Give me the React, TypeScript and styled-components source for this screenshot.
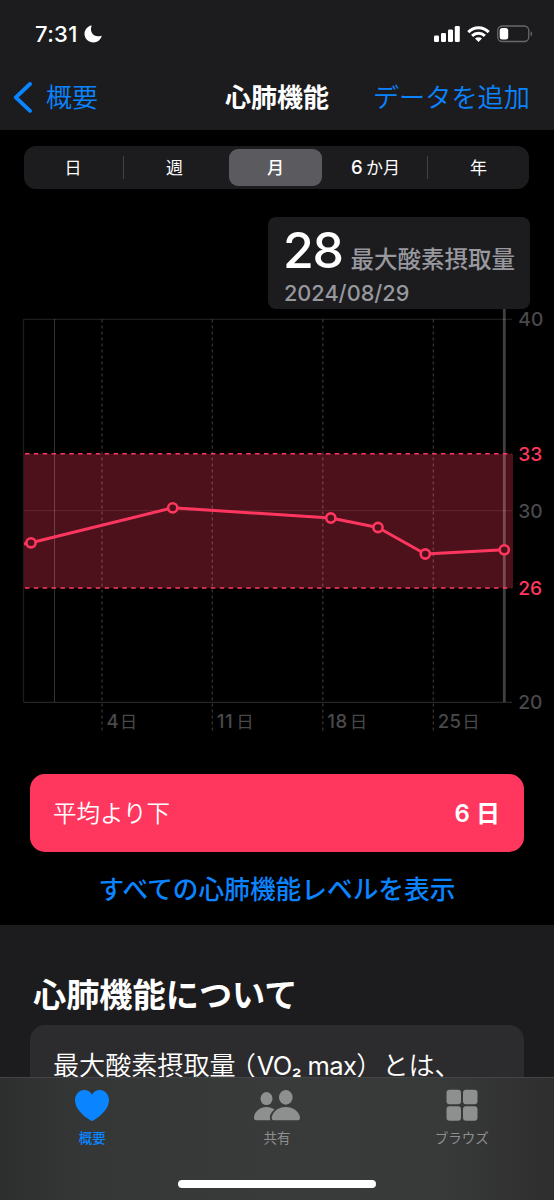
import React from "react";
import styled, { createGlobalStyle } from "styled-components";

const FONT = `Inter, "Noto Sans CJK JP", sans-serif`;
const BLUE = "#0a84ff";
const PINK = "#ff375f";

const GlobalStyle = createGlobalStyle`
  *, *::before, *::after { box-sizing: border-box; }
  body { margin: 0; background: #000; font-family: ${FONT}; color: #fff; }
  svg { display: block; }
`;

const Screen = styled.div`
  width: 554px;
  height: 1200px;
  display: flex;
  flex-direction: column;
  overflow: hidden;
  background: #000;
`;

const Header = styled.header`
  height: 130px;
  flex: none;
  background: #1c1c1e;
`;

const StatusBar = styled.div`
  height: 68px;
  padding: 0 21px 0 35px;
  display: flex;
  align-items: center;
  justify-content: space-between;
`;

const Clock = styled.div`
  display: flex;
  align-items: center;
  gap: 6px;
  font-size: 22px;
  font-weight: 550;
  line-height: 26px;
  letter-spacing: 0.3px;
`;

const StatusIcons = styled.div`
  display: flex;
  align-items: center;
  gap: 7px;
`;

const NavBar = styled.nav`
  height: 58px;
  padding-top: 2px;
  display: grid;
  grid-template-columns: 225px 104px 1fr;
  align-items: center;
  font-size: 26px;
  line-height: 38px;
  white-space: nowrap;
`;

const NavLink = styled.a<{ $end?: boolean }>`
  display: flex;
  align-items: center;
  gap: 13px;
  justify-content: ${(p) => (p.$end ? "flex-end" : "flex-start")};
  padding: ${(p) => (p.$end ? "0 24px 0 0" : "0 0 0 13px")};
  font-size: ${(p) => (p.$end ? "26.2px" : "26px")};
  color: ${BLUE};
  font-weight: 350;
`;

const NavTitle = styled.h1`
  margin: 0;
  font-size: 26px;
  font-weight: 600;
`;

const Content = styled.main`
  flex: 1;
  min-height: 0;
  overflow: hidden;
`;

const ChartSection = styled.section`
  height: 795px;
  padding-top: 16px;
`;

const Segmented = styled.div`
  height: 43px;
  margin: 0 25px 0 24px;
  padding: 3px;
  border-radius: 12px;
  background: #1c1c1e;
  display: grid;
  grid-template-columns: 97px 105px 93px 106px 1fr;
`;

const Segment = styled.div<{ $active?: boolean; $divider?: boolean }>`
  display: flex;
  align-items: center;
  justify-content: center;
  border-radius: 9px;
  font-size: 17px;
  line-height: 24px;
  font-weight: ${(p) => (p.$active ? 500 : 400)};
  background: ${(p) => (p.$active ? "#5b5a5f" : "transparent")};
  ${(p) =>
    p.$divider &&
    `&::after {
      content: "";
      width: 1px;
      height: 23px;
      background: #424245;
      margin-left: auto;
    }
    &::before {
      content: "";
      margin-right: auto;
    }`}
`;

const SegmentLabel = styled.span<{ $shift?: number }>`
  margin: ${(p) => `0 ${Math.max(p.$shift ?? 0, 0)}px 0 ${Math.max(-(p.$shift ?? 0), 0)}px`};
`;

const SegmentDigit = styled.span`
  margin-right: 3.5px;
  font-size: 18.5px;
  font-weight: 500;
`;

const Callout = styled.div`
  width: 262px;
  height: 92px;
  margin: 28px 0 0 268px;
  padding: 5px 15px 0 15px;
  border-radius: 8px;
  background: #1c1c1e;
  white-space: nowrap;
`;

const CalloutValue = styled.div`
  display: flex;
  align-items: baseline;
  height: 57px;
  line-height: 56px;
  font-size: 50px;
  font-weight: 500;
  letter-spacing: -1.4px;
`;

const CalloutUnit = styled.span`
  margin-left: 8px;
  font-size: 23.5px;
  font-weight: 500;
  letter-spacing: 0;
  color: #98989f;
`;

const CalloutDate = styled.div`
  padding-left: 1px;
  font-size: 21.7px;
  line-height: 28px;
  font-weight: 500;
  color: #98989f;
`;

const Chart = styled.svg`
  width: 554px;
  height: 441px;
  font-family: ${FONT};
  font-weight: 500;
`;

const LevelCard = styled.div`
  height: 78px;
  margin: 24px 30px 0;
  padding: 2px 24px 0 23px;
  border-radius: 15px;
  background: ${PINK};
  display: flex;
  align-items: center;
  justify-content: space-between;
  font-size: 23.5px;
  line-height: 34px;
  font-weight: 350;
`;

const LevelCount = styled.strong`
  font-size: 24px;
  font-weight: 600;
`;

const AllLevels = styled.a`
  display: block;
  margin-top: 19px;
  text-align: center;
  font-size: 25.7px;
  line-height: 38px;
  font-weight: 500;
  color: ${BLUE};
`;

const About = styled.section`
  height: 400px;
  padding: 46px 30px 0;
  background: #1c1c1e;
`;

const AboutTitle = styled.h2`
  margin: 0 0 6px 3px;
  font-size: 33.2px;
  line-height: 48px;
  font-weight: 700;
`;

const AboutCard = styled.div`
  height: 300px;
  padding: 22px 23px;
  border-radius: 15px;
  background: #2c2c2e;
  font-size: 26.1px;
  line-height: 38px;
  font-weight: 350;
  white-space: nowrap;
`;

const Latin = styled.span`
  font-size: 25.5px;
  letter-spacing: -0.6px;
  font-weight: 400;
`;

const Subscript = styled.span`
  font-size: 22px;
  font-weight: 500;
  line-height: 1;
  vertical-align: 1.5px;
`;

const OpenParen = styled.span`
  display: inline-block;
  width: 21px;
  text-indent: -6px;
`;

const TabBar = styled.footer`
  height: 123px;
  flex: none;
  border-top: 1px solid #434445;
  background: linear-gradient(90deg, #2d2e2e 0%, #353636 15%, #393a3a 50%, #383939 80%, #2e2e2e 100%);
  display: flex;
  flex-direction: column;
  align-items: center;
`;

const Tabs = styled.div`
  width: 100%;
  height: 102px;
  display: grid;
  grid-template-columns: repeat(3, 1fr);
`;

const Tab = styled.div<{ $active?: boolean }>`
  display: flex;
  flex-direction: column;
  align-items: center;
  padding-top: 11px;
  gap: 6px;
  color: ${(p) => (p.$active ? BLUE : "#8e8f8f")};
  font-size: 13.5px;
  line-height: 20px;
  font-weight: ${(p) => (p.$active ? 500 : 400)};
`;

const HomeIndicator = styled.div`
  width: 198px;
  height: 8px;
  border-radius: 4px;
  background: #fff;
`;

const GRID_X = [
  { x: 102, day: "4", dayWidth: 14.2 },
  { x: 212.3, day: "11", dayWidth: 20.5 },
  { x: 322.8, day: "18", dayWidth: 23.5 },
  { x: 433.3, day: "25", dayWidth: 25.5 },
];

const AXIS = [
  { y: 10, label: "40" },
  { y: 144.3, label: "33", accent: true },
  { y: 201.5, label: "30" },
  { y: 278.3, label: "26", accent: true },
  { y: 393, label: "20" },
];

const POINTS = [
  [31, 233.8],
  [172.7, 198.8],
  [330.8, 209],
  [378, 218.5],
  [425.3, 245],
  [504.3, 240.8],
];

function CardioChart() {
  return (
    <Chart viewBox="0 0 554 441">
      <g stroke="#1d1d1f" strokeWidth="1.3">
        <path d="M23.5 10.3H512M23.5 10v383" />
        <path d="M23.5 393.3H512" stroke="#262628" />
      </g>
      <rect x="24" y="145" width="489" height="134" fill="#4d111c" />
      <path d="M24 201.7H512" stroke="#642631" strokeWidth="1" />
      <path d="M54.5 10V393" stroke="#fff" strokeOpacity=".2" strokeWidth="1" />
      {GRID_X.map((g) => (
        <g key={g.day}>
          <path d={`M${g.x} 10.5V424`} stroke="#fff" strokeOpacity=".22" strokeWidth="1.2" strokeDasharray="3 3" />
          <text x={g.x + 4.5} y="419" fontSize="18.5" letterSpacing=".4" fill="#49494b">
            {g.day}
          </text>
          <text x={g.x + 3.5 + g.dayWidth} y="419" fontSize="17.5" fontWeight="400" fill="#49494b">
            日
          </text>
        </g>
      ))}
      <path d="M504.3 0V393" stroke="#fff" strokeOpacity=".25" strokeWidth="2.8" />
      <path d="M25 144.8H512M25 279H512" stroke={PINK} strokeWidth="1.5" strokeDasharray="4.5 4.35" />
      <path
        d={`M24 235L${POINTS.map((p) => p.join(" ")).join("L")}`}
        fill="none"
        stroke={PINK}
        strokeWidth="3"
        strokeLinejoin="round"
      />
      {POINTS.map(([x, y]) => (
        <circle key={x} cx={x} cy={y} r="4.6" fill="#4d111c" stroke={PINK} strokeWidth="2.6" />
      ))}
      {AXIS.map((a) => (
        <text key={a.label} x="518.3" y={a.y + 7.4} fontSize="19.2" fill={a.accent ? PINK : "#49494b"}>
          {a.label}
        </text>
      ))}
    </Chart>
  );
}

function MoonIcon() {
  return (
    <svg width="18" height="18" viewBox="0 0 18 18" fill="#fff">
      <path d="M6.7.5C7.4.2 7.8.7 7.5 1.3C5.6 6.3 8.9 11.3 14 11.3C15.1 11.3 15.9 11.2 16.7 10.9C17.4 10.7 17.8 11.1 17.5 11.8C16.2 15.2 13.1 17.5 9.6 17.5C4.5 17.5.5 13.7.5 8.8C.5 5.2 3 1.9 6.7.5Z" />
    </svg>
  );
}

function SignalIcon() {
  return (
    <svg width="26" height="16" viewBox="0 0 26 16" fill="#fff">
      <rect x="0" y="9.5" width="5" height="6.5" rx="1.3" />
      <rect x="7" y="7" width="5" height="9" rx="1.3" />
      <rect x="14" y="3.5" width="5" height="12.5" rx="1.3" />
      <rect x="20.8" y="0" width="5" height="16" rx="1.3" />
    </svg>
  );
}

function WifiIcon() {
  return (
    <svg width="23" height="16" viewBox="0 0 23 16" fill="none" stroke="#fff" strokeWidth="3">
      <path d="M1.3 6.1C7.1.3 15.9.3 21.7 6.1" />
      <path d="M5.1 9.9C8.8 6.3 14.2 6.3 17.9 9.9" />
      <path d="M11.5 16L8 12.6C10 10.8 13 10.8 15 12.6Z" fill="#fff" stroke="none" />
    </svg>
  );
}

function BatteryIcon() {
  return (
    <svg width="36" height="18" viewBox="0 0 36 18">
      <rect x=".75" y="1" width="31" height="15.5" rx="4.5" fill="none" stroke="#68686b" strokeWidth="1.3" />
      <rect x="2.7" y="3" width="8.5" height="11.5" rx="2.5" fill="#fff" />
      <path d="M33.6 6.2C35.7 7 35.7 10.5 33.6 11.3Z" fill="#68686b" />
    </svg>
  );
}

function ChevronIcon() {
  return (
    <svg width="20" height="32" viewBox="0 0 20 32" fill="none" stroke={BLUE} strokeWidth="3.9" strokeLinecap="round" strokeLinejoin="round">
      <path d="M17 2L2.8 15.3L17 28.8" />
    </svg>
  );
}

function HeartIcon() {
  return (
    <svg width="36" height="33" viewBox="0 0 36 33" fill={BLUE}>
      <path d="M18 32C17.4 32 16.9 31.7 16.3 31.3C8.1 26.2 1 19.2 1 11.5C1 5.5 5 1 10.3 1C13.7 1 16.5 2.8 18 5.6C19.5 2.8 22.3 1 25.7 1C31 1 35 5.5 35 11.5C35 19.2 27.9 26.2 19.7 31.3C19.1 31.7 18.6 32 18 32Z" />
    </svg>
  );
}

function PeopleIcon() {
  return (
    <svg width="48" height="33" viewBox="0 0 48 33" fill="currentColor">
      <ellipse cx="13.5" cy="9.6" rx="6" ry="6.5" />
      <ellipse cx="32.8" cy="8.4" rx="6.8" ry="7.3" />
      <path d="M3.5 31.2C1.8 31.2 1 30.4 1 28.7C1 23.5 6.2 18 13.5 18C16.7 18 19.4 19 21.5 20.6C18.3 23 16.7 26 16.9 28.9C16.9 29.8 17.2 30.6 17.6 31.2Z" />
      <path d="M21.5 31.2C19.6 31.2 18.7 30.4 18.7 28.9C18.7 24.7 24 18 32.8 18C41.7 18 47 24.7 47 28.9C47 30.4 46 31.2 44.1 31.2Z" />
    </svg>
  );
}

function GridIcon() {
  return (
    <svg width="32" height="33" viewBox="0 0 32 33" fill="currentColor">
      <rect x=".5" y=".8" width="14.5" height="14.5" rx="3" />
      <rect x="17" y=".8" width="14.5" height="14.5" rx="3" />
      <rect x=".5" y="17.3" width="14.5" height="14.5" rx="3" />
      <rect x="17" y="17.3" width="14.5" height="14.5" rx="3" />
    </svg>
  );
}

export default function App() {
  return (
    <Screen lang="ja">
      <GlobalStyle />
      <Header>
        <StatusBar>
          <Clock>
            7:31
            <MoonIcon />
          </Clock>
          <StatusIcons>
            <SignalIcon />
            <WifiIcon />
            <BatteryIcon />
          </StatusIcons>
        </StatusBar>
        <NavBar>
          <NavLink>
            <ChevronIcon />
            概要
          </NavLink>
          <NavTitle>心肺機能</NavTitle>
          <NavLink $end>データを追加</NavLink>
        </NavBar>
      </Header>
      <Content>
        <ChartSection>
          <Segmented>
            <Segment $divider>
              <SegmentLabel $shift={4}>日</SegmentLabel>
            </Segment>
            <Segment>
              <SegmentLabel $shift={4}>週</SegmentLabel>
            </Segment>
            <Segment $active>月</Segment>
            <Segment $divider>
              <SegmentLabel $shift={-2}>
                <SegmentDigit>6</SegmentDigit>か月
              </SegmentLabel>
            </Segment>
            <Segment>
              <SegmentLabel $shift={-3}>年</SegmentLabel>
            </Segment>
          </Segmented>
          <Callout>
            <CalloutValue>
              28<CalloutUnit>最大酸素摂取量</CalloutUnit>
            </CalloutValue>
            <CalloutDate>2024/08/29</CalloutDate>
          </Callout>
          <CardioChart />
          <LevelCard>
            <span>平均より下</span>
            <LevelCount>6 日</LevelCount>
          </LevelCard>
          <AllLevels>すべての心肺機能レベルを表示</AllLevels>
        </ChartSection>
        <About>
          <AboutTitle>心肺機能について</AboutTitle>
          <AboutCard>
            最大酸素摂取量<OpenParen>（</OpenParen>
            <Latin>
              VO<Subscript>₂</Subscript> max
            </Latin>
            ）とは、
          </AboutCard>
        </About>
      </Content>
      <TabBar>
        <Tabs>
          <Tab $active>
            <HeartIcon />
            概要
          </Tab>
          <Tab>
            <PeopleIcon />
            共有
          </Tab>
          <Tab>
            <GridIcon />
            ブラウズ
          </Tab>
        </Tabs>
        <HomeIndicator />
      </TabBar>
    </Screen>
  );
}
